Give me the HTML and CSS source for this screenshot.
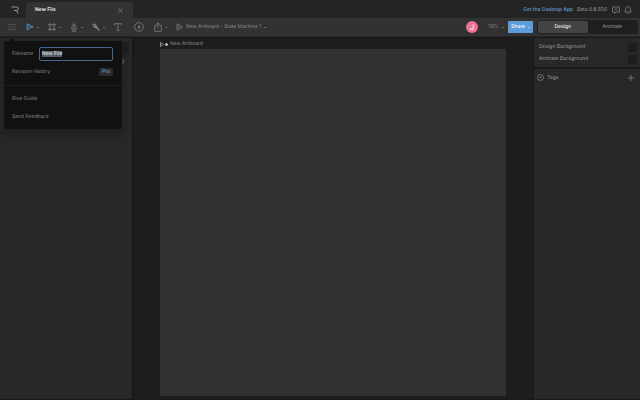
FILE: index.html
```
<!DOCTYPE html>
<html lang="en">
<head>
    <meta charset="UTF-8">
    <meta name="viewport" content="width=device-width, initial-scale=1.0">
    <title>New File</title>
    <link rel="stylesheet" href="styles.css">
</head>
<body>
    <header class="titlebar">
        <a class="logo" href="#" aria-label="Home">
            <svg width="8" height="8" viewBox="0 0 8 8"><path d="M.5 1H5.500a1.700 1.700 0 0 1 0 3.500H3M5.500 4.500L7 7.500"/></svg>
        </a>
        <div class="tab">
            <span>New File</span>
            <button class="tab-close" aria-label="Close">
                <svg width="5" height="5" viewBox="0 0 5 5"><path d="M.5.5l4 4M4.500.5l-4 4"/></svg>
            </button>
        </div>
        <div class="title-right">
            <a class="desktop-link" href="#">Get the Desktop App</a>
            <span class="version">Beta 0.8.936</span>
            <button aria-label="Feedback">
                <svg width="8" height="8" viewBox="0 0 8 8"><path d="M.5 1h7v5H4L2.500 7.500V6h-2zM3 2.500l2 2M5 2.500l-2 2"/></svg>
            </button>
            <button aria-label="Notifications">
                <svg width="8" height="8" viewBox="0 0 8 8"><path d="M.7 6h6.600L6.400 4.800V3a2.400 2.400 0 0 0-4.800 0v1.800zM3.200 7.300h1.600"/></svg>
            </button>
        </div>
    </header>

    <nav class="toolbar">
        <div class="tools">
            <button class="menu-btn" aria-label="Menu">
                <svg width="8" height="8" viewBox="0 0 8 8"><path d="M0 1.500h8M0 4h8M0 6.500h8"/></svg>
            </button>
            <button class="tool active" aria-label="Select">
                <svg width="8" height="8" viewBox="0 0 8 8"><path d="M1 .7L7 4 3.800 4.700 1.300 7.300z"/></svg>
                <i class="arrow"></i>
            </button>
            <button class="tool" aria-label="Artboard">
                <svg width="8" height="8" viewBox="0 0 8 8"><path d="M2 0v8M6 0v8M0 1.700h8M0 6.300h8"/></svg>
                <i class="arrow"></i>
            </button>
            <button class="tool" aria-label="Pen">
                <svg width="8" height="9" viewBox="0 0 8 9"><path d="M4 .5L1.500 4.500l1 2.500h3l1-2.500zM4 1v3.500M1.500 8.300h5"/><circle cx="4" cy="5" r=".5"/></svg>
                <i class="arrow"></i>
            </button>
            <button class="tool" aria-label="Bone">
                <svg width="8" height="8" viewBox="0 0 8 8"><path class="fill" d="M.7 1.200Q2-.2 3.900 1.300L5.500 4 8 7.200 7.300 7.900 4.400 5.500 1.400 4Q.2 2.500.7 1.200z"/><circle class="hole" cx="2.300" cy="2.400" r=".7"/></svg>
                <i class="arrow"></i>
            </button>
            <button class="tool single" aria-label="Text">
                <svg width="8" height="8" viewBox="0 0 8 8"><path d="M.5 2.200V.7h7v1.500M4 .7v6.800M2.700 7.500h2.600"/></svg>
            </button>
            <button class="tool single" aria-label="Events">
                <svg width="10" height="10" viewBox="0 0 10 10"><circle cx="5" cy="5" r="4.300"/><path class="fill" d="M5.500 2.300L3.300 5.400h1.500L4.500 7.700 6.700 4.600H5.200z"/></svg>
            </button>
            <button class="tool" aria-label="Export">
                <svg width="8" height="10" viewBox="0 0 8 10"><path d="M2.500 3.500H.7v5.800h6.600V3.500H5.500M4 6.500V.8M2 2.700L4 .8l2 1.900"/></svg>
                <i class="arrow"></i>
            </button>
        </div>
        <button class="play">
            <svg width="7" height="8" viewBox="0 0 7 8"><path d="M1 .8L6.500 4 1 7.200zM2.700 2.500v3"/></svg>
            <span>New Artboard - State Machine 1</span>
            <i class="arrow"></i>
        </button>
        <div class="toolbar-right">
            <span class="avatar">J</span>
            <button class="zoom">78% <i class="arrow"></i></button>
            <button class="share">Share <i class="arrow"></i></button>
            <div class="mode">
                <button class="selected">Design</button>
                <button>Animate</button>
            </div>
        </div>
    </nav>

    <main class="workspace">
        <aside class="left-panel">
            <div class="search-tab"></div>
            <svg class="search-icon" width="5" height="6" viewBox="0 0 5 6"><circle cx="2.500" cy="2" r="1.500"/><path d="M3 3.500L2 5"/></svg>
            <div class="file-menu">
                <div class="row">
                    <label for="filename">Filename</label>
                    <input id="filename" type="text" value="New File" autofocus>
                </div>
                <a class="row" href="#">Revision History <span class="pro">Pro</span></a>
                <hr>
                <a class="row" href="#">Rive Guide</a>
                <a class="row" href="#">Send Feedback</a>
            </div>
        </aside>

        <section class="stage">
            <div class="artboard-label">
                <svg width="4" height="5" viewBox="0 0 4 5"><path d="M.5.5L3.500 2.500l-3 2z"/></svg>
                <i class="dot"></i>
                <span>New Artboard</span>
            </div>
            <div class="artboard"></div>
        </section>

        <aside class="right-panel">
            <div class="group backgrounds">
                <div class="prop"><span>Design Background</span><button class="swatch" aria-label="Design Background"></button></div>
                <div class="prop"><span>Animate Background</span><button class="swatch" aria-label="Animate Background"></button></div>
            </div>
            <div class="group tags">
                <svg width="7" height="7" viewBox="0 0 7 7"><circle cx="3.500" cy="3.500" r="3"/><path class="fill" d="M2.200 2.700h2.600L3.500 4.500z"/></svg>
                <span>Tags</span>
                <button class="add" aria-label="Add tag">
                    <svg width="6" height="6" viewBox="0 0 6 6"><path d="M3 0v6M0 3h6"/></svg>
                </button>
            </div>
        </aside>
    </main>

    <script>
        document.getElementById("filename").focus();
        document.getElementById("filename").select();
    </script>
</body>
</html>
```
FILE: styles.css
```
* {
    box-sizing: border-box;
}
body {
    margin: 0;
    height: 100vh;
    display: flex;
    flex-direction: column;
    overflow: hidden;
    background: #1d1d1d;
    color: #999;
    font-family: Inter, "Liberation Sans", sans-serif;
    font-size: 5px;
    line-height: 8px;
    text-rendering: geometricPrecision;
}
button {
    display: flex;
    align-items: center;
    margin: 0;
    padding: 0;
    border: none;
    background: none;
    color: inherit;
    font: inherit;
    text-rendering: inherit;
}
a {
    color: inherit;
    text-decoration: none;
}
svg {
    display: block;
    flex: none;
    fill: none;
    stroke: #808080;
    stroke-width: 0.8;
}
.fill {
    fill: #808080;
    stroke: none;
}
.hole {
    fill: #323232;
    stroke: none;
}
.arrow {
    border: 1px solid transparent;
    border-top-color: #999;
    border-bottom: none;
    flex: none;
}

/* title bar */
.titlebar {
    flex: none;
    display: flex;
    align-items: center;
    height: 18px;
    background: #242424;
}
.logo {
    width: 26px;
    padding: 2px 0 0 11px;
}
.logo svg {
    stroke: #999;
    stroke-width: 1;
}
.tab {
    display: flex;
    align-items: center;
    justify-content: space-between;
    align-self: flex-end;
    width: 107px;
    height: 16px;
    padding: 0 10px 0 9px;
    border-radius: 2px 2px 0 0;
    background: #323232;
    color: #eee;
    font-weight: 600;
}
.title-right {
    display: flex;
    align-items: center;
    gap: 4px;
    margin-left: auto;
    padding: 2px 8px 0 0;
}
.desktop-link {
    color: #659cd4;
    font-weight: 500;
}
.version {
    margin-right: 1px;
}

/* toolbar */
.toolbar {
    flex: none;
    display: flex;
    align-items: center;
    height: 19px;
    background: #323232;
    border-bottom: 1px solid #262626;
}
.tools {
    display: flex;
    align-items: center;
    padding-left: 8px;
}
.menu-btn {
    width: 18px;
}
.menu-btn svg {
    stroke: #555;
}
.tool {
    gap: 3px;
    width: 22px;
}
.tool.single {
    width: 20px;
}
.tool.active svg {
    stroke: #5583b5;
    fill: #3c4c5e;
    stroke-width: 1;
}
.play {
    gap: 3px;
    color: #8a8a8a;
}
.toolbar-right {
    display: flex;
    align-items: center;
    margin-left: auto;
    padding-right: 2px;
}
.avatar {
    width: 12px;
    height: 12px;
    margin-right: 10px;
    border-radius: 50%;
    background: #ed7194;
    color: #fff;
    font-size: 8px;
    line-height: 12px;
    text-align: center;
}
.zoom {
    gap: 3px;
    width: 20px;
    color: #808080;
}
.share {
    justify-content: center;
    gap: 3px;
    width: 25px;
    height: 12px;
    margin-right: 4px;
    border-radius: 1px;
    background: #5f9cda;
    color: #fff;
    font-weight: 500;
}
.share .arrow {
    border-top-color: #d5e5f5;
}
.mode {
    display: flex;
    width: 101px;
    height: 14px;
    padding: 1px;
    border-radius: 3px;
    background: #1f1f1f;
}
.mode button {
    flex: 1;
    justify-content: center;
    border-radius: 2px;
}
.mode .selected {
    background: #444;
    color: #eee;
    font-weight: 500;
}

/* workspace */
.workspace {
    flex: 1;
    display: flex;
    min-height: 0;
    padding: 1px 0;
    background: #191919;
}
.left-panel {
    position: relative;
    width: 132px;
    margin-right: 2px;
    background: #282828;
}
.search-tab {
    height: 12px;
    margin: 3px 3px 0 4px;
    border-radius: 2px;
    background: #202020;
}
.search-icon {
    margin: 6px 0 0 120px;
}
.file-menu {
    position: absolute;
    z-index: 1;
    top: 3px;
    left: 4px;
    width: 118px;
    height: 88px;
    padding: 4px 9px 0 8px;
    border-radius: 2px;
    background: #111;
    box-shadow: 0 4px 8px 3px rgba(0, 0, 0, 0.2);
    color: #888;
}
.file-menu::before {
    content: "";
    position: absolute;
    top: -3px;
    left: 5px;
    border: 3px solid transparent;
    border-top: none;
    border-bottom-color: #111;
}
.row {
    display: flex;
    align-items: center;
    justify-content: space-between;
    height: 18px;
}
.file-menu input {
    width: 74px;
    height: 14px;
    padding: 0 2px;
    border: 1px solid #45698f;
    border-radius: 2px;
    outline: none;
    background: #111;
    color: #ccc;
    font: inherit;
    text-rendering: inherit;
}
.file-menu input::selection {
    background: #56606c;
    color: #eee;
}
.pro {
    padding: 0 3px;
    border-radius: 1px;
    background: #2b2b2b;
    color: #659cd4;
    font-weight: 500;
}
.file-menu hr {
    margin: 4px -9px 4px -8px;
    border: none;
    border-top: 1px solid #202020;
}
.stage {
    flex: 1;
    display: flex;
    flex-direction: column;
    padding: 1px 27px 3px 26px;
    background: #1d1d1d;
}
.artboard-label {
    display: flex;
    align-items: center;
    gap: 1px;
    height: 10px;
    color: #888;
}
.artboard-label svg {
    stroke: #aaa;
}
.dot {
    width: 3px;
    height: 3px;
    margin-right: 1px;
    border-radius: 50%;
    background: #bbb;
}
.artboard {
    flex: 1;
    background: #313131;
}
.right-panel {
    display: flex;
    flex-direction: column;
    gap: 2px;
    width: 107px;
    padding-left: 1px;
}
.group {
    background: #282828;
}
.backgrounds {
    padding: 3px 3px 2px 5px;
}
.prop {
    display: flex;
    align-items: center;
    justify-content: space-between;
    height: 12px;
}
.swatch {
    width: 9px;
    height: 9px;
    border-radius: 1px;
    background: #1d1d1d;
}
.tags {
    flex: 1;
    display: flex;
    align-items: flex-start;
    gap: 3px;
    padding: 5px 6px 0 3px;
}
.add {
    height: 8px;
    margin-left: auto;
}
```
